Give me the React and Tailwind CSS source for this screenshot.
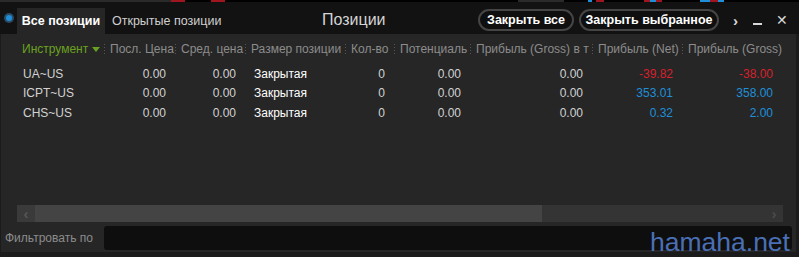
import React from 'react';

const cols = [
    { title: 'Инструмент', w: 'w-[87px]', first: true },
    { title: 'Посл. Цена', w: 'w-[71px]' },
    { title: 'Сред. цена', w: 'w-[70px]' },
    { title: 'Размер позиции', w: 'w-[100px]' },
    { title: 'Кол-во', w: 'w-[49px]' },
    { title: 'Потенциаль', w: 'w-[76px]' },
    { title: 'Прибыль (Gross) в т', w: 'w-[122px]' },
    { title: 'Прибыль (Net)', w: 'w-[90px]' },
    { title: 'Прибыль (Gross)', w: 'w-[100px]' },
];

const rows = [
    { sym: 'UA~US', net: '-39.82', gross: '-38.00', neg: true },
    { sym: 'ICPT~US', net: '353.01', gross: '358.00' },
    { sym: 'CHS~US', net: '0.32', gross: '2.00' },
];

// dotted column divider in the header
const Sep = () => (
    <span className="shrink-0 mr-[5px] w-[1px] h-[11px] bg-[repeating-linear-gradient(to_bottom,#555_0px,#555_1px,transparent_1px,transparent_3px)]" />
);

const PillButton = ({ children, w }) => (
    <button className={`${w} h-[22px] rounded-full border-2 border-[#454545] bg-[#0f0f0f] text-white text-[12.5px] font-bold`}>
        {children}
    </button>
);

export default function App() {
    return (
        <div className="relative w-[799px] h-[257px] bg-[#1b1b1b] overflow-hidden font-['Liberation_Sans',sans-serif] text-[12px]">
            {/* chart strip above the window */}
            <div className="h-[2px] flex bg-black">
                <span className="w-[171px] bg-[#2a2a2a]" />
                <span className="w-[14px] bg-[#a01520]" />
                <span className="w-[26px]" />
                <span className="w-[14px] bg-[#a01520]" />
                <span className="w-[293px]" />
                <span className="w-[46px] bg-[#2a2a2a]" />
                <span className="w-[24px]" />
                <span className="w-[4px] bg-[#1e8fd8]" />
                <span className="w-[4px]" />
                <span className="w-[8px] bg-[#a01520]" />
                <span className="w-[40px]" />
                <span className="w-[6px] bg-[#a01520]" />
                <span className="w-[6px] bg-[#1e8fd8]" />
                <span className="w-[6px] bg-[#a01520]" />
                <span className="w-[38px]" />
                <span className="w-[10px] bg-[#1e8fd8]" />
                <span className="w-[8px] bg-[#a01520]" />
                <span className="w-[6px] bg-[#1e8fd8]" />
            </div>

            {/* title bar */}
            <div className="h-[32px] bg-[#121212] flex items-end relative">
                <div className="w-[17px] h-full flex items-center justify-center">
                    <span className="w-[6px] h-[6px] rounded-full bg-[#1e8fd8] ring-2 ring-[#2b4b66]" />
                </div>
                <div className="w-[88px] h-[26px] bg-[#262626] flex items-center justify-center text-white font-bold text-[12.5px]">
                    Все позиции
                </div>
                <div className="h-[26px] flex items-center pl-[7px] text-[#d0d0d0] text-[12.5px]">
                    Открытые позиции
                </div>
                <div className="absolute left-[322px] top-[6px] text-[16px] text-[#d4d4d4]">Позиции</div>
                <div className="ml-auto h-full flex items-center pt-[4px]">
                    <PillButton w="w-[96px]">Закрыть все</PillButton>
                    <span className="w-[5px]" />
                    <PillButton w="w-[140px]">Закрыть выбранное</PillButton>
                    <span className="ml-[14px] text-[#d8d8d8] text-[15px] font-bold leading-none">›</span>
                    <span className="ml-[15px] w-[9px] h-[2px] mt-[8px] bg-[#d8d8d8]" />
                    <span className="ml-[14px] mr-[11px] text-[#d8d8d8] text-[14px] leading-none">✕</span>
                </div>
            </div>

            {/* content */}
            <div className="ml-[1px] mr-[3px] h-[190px] bg-[#262626] pl-[16px] pt-[6px] flex flex-col">
                <div className="flex h-[18px] items-center">
                    {cols.map((c, i) => (
                        <div key={i} className={`${c.w} flex items-center shrink-0 whitespace-nowrap overflow-hidden`}>
                            {!c.first && <Sep />}
                            {c.first ? (
                                <span className="pl-[5px] text-[#6aa121] flex items-center gap-[4px]">
                                    Инструмент
                                    <span className="w-0 h-0 border-l-[4px] border-r-[4px] border-t-[5px] border-l-transparent border-r-transparent border-t-[#6aa121]" />
                                </span>
                            ) : (
                                <span className="text-[#8c8c8c]">{c.title}</span>
                            )}
                        </div>
                    ))}
                </div>
                <div className="mt-[6px] flex flex-col">
                    {rows.map((r) => (
                        <div key={r.sym} className="flex h-[19.5px] items-center text-[#d2d2d2]">
                            <div className="w-[87px] pl-[6px]">{r.sym}</div>
                            <div className="w-[71px] text-right pr-[9px]">0.00</div>
                            <div className="w-[70px] text-right pr-[9px]">0.00</div>
                            <div className="w-[100px] pl-[9px] text-white">Закрытая</div>
                            <div className="w-[49px] text-right pr-[9px]">0</div>
                            <div className="w-[76px] text-right pr-[9px]">0.00</div>
                            <div className="w-[122px] text-right pr-[9px]">0.00</div>
                            <div className={`w-[90px] text-right pr-[9px] ${r.neg ? 'text-[#d8202c]' : 'text-[#1e8fd8]'}`}>{r.net}</div>
                            <div className={`w-[100px] text-right pr-[9px] ${r.neg ? 'text-[#d8202c]' : 'text-[#1e8fd8]'}`}>{r.gross}</div>
                        </div>
                    ))}
                </div>

                {/* horizontal scrollbar */}
                <div className="mt-auto mb-[2px] mr-[13px] h-[17px] bg-[#343434] flex">
                    <div className="w-[18px] bg-[#3a3a3a] flex items-center justify-center text-[#555] text-[15px] font-bold leading-none">‹</div>
                    <div className="w-[507px] bg-[#444444]" />
                    <div className="ml-auto w-[18px] flex items-center justify-center text-[#4a4a4a] text-[15px] font-bold leading-none">›</div>
                </div>
            </div>

            {/* filter row */}
            <div className="ml-[1px] mr-[3px] h-[28px] bg-[#262626] flex items-center">
                <span className="pl-[4px] w-[103px] text-[#8c8c8c]">Фильтровать по</span>
                <div className="w-[688px] h-[24px] bg-[#0e0e0e] rounded-[3px]" />
            </div>

            <div className="absolute left-[650px] top-[229px] text-[#4a6fb5] text-[26.5px] leading-none font-['Liberation_Sans',sans-serif]">
                hamaha.net
            </div>
        </div>
    );
}
